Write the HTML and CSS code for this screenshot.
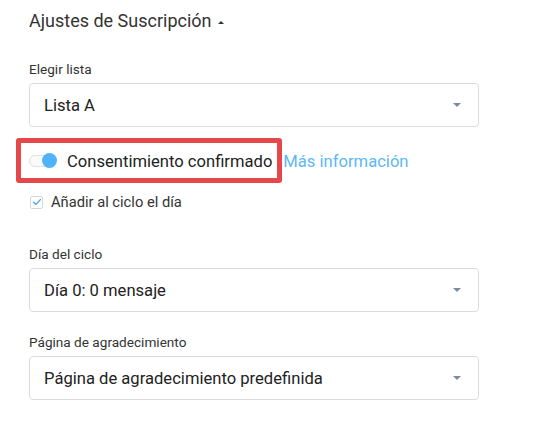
FILE: index.html
```html
<!DOCTYPE html>
<html lang="es">
<head>
<meta charset="utf-8">
<link rel="stylesheet" href="styles.css">
</head>
<body>
<div class="panel">
  <div class="title">Ajustes de Suscripción <span class="caret-up"></span></div>

  <div class="field first">
    <div class="label">Elegir lista</div>
    <div class="select"><span>Lista A</span><span class="caret"></span></div>
  </div>

  <div class="consent">
    <span class="highlight">
      <span class="toggle"><span class="knob"></span></span>
      <span class="consent-text">Consentimiento confirmado</span>
    </span>
    <a class="more">Más información</a>
  </div>

  <div class="check-row">
    <span class="checkbox">
      <svg width="10" height="10" viewBox="0 0 10 10"><path d="M1.6 5.2 L4 7.4 L8.4 2.6" fill="none" stroke="#4aa8f0" stroke-width="1.4" stroke-linecap="round" stroke-linejoin="round"/></svg>
    </span>
    <span class="check-text">Añadir al ciclo el día</span>
  </div>

  <div class="field second">
    <div class="label">Día del ciclo</div>
    <div class="select"><span>Día 0: 0 mensaje</span><span class="caret"></span></div>
  </div>

  <div class="field third">
    <div class="label">Página de agradecimiento</div>
    <div class="select"><span>Página de agradecimiento predefinida</span><span class="caret"></span></div>
  </div>
</div>
</body>
</html>
```

FILE: styles.css
```css
* { box-sizing: border-box; }
html, body { margin: 0; padding: 0; background: #fff; }
body {
  font-family: Roboto, "Liberation Sans", sans-serif;
  color: #222;
  width: 544px;
  height: 426px;
  overflow: hidden;
}
.panel {
  padding: 9px 0 0 29px;
  width: 479px;
}
.title {
  font-size: 18px;
  line-height: 24px;
  height: 24px;
  color: #333;
  display: flex;
  align-items: center;
}
.caret-up {
  display: inline-block;
  width: 0; height: 0;
  margin-left: 6px;
  margin-top: 2px;
  border-left: 3px solid transparent;
  border-right: 3px solid transparent;
  border-bottom: 3px solid #333;
}
.field.first { margin-top: 28px; }
.field.second { margin-top: 36px; }
.field.third { margin-top: 22px; }
.label {
  font-size: 13.6px;
  line-height: 16px;
  height: 16px;
  color: #333;
}
.select {
  margin-top: 6px;
  height: 44px;
  border: 1px solid #dcdcdc;
  border-radius: 4px;
  display: flex;
  align-items: center;
  justify-content: space-between;
  padding: 0 17px 0 14px;
  font-size: 16.6px;
  color: #222;
}
.caret {
  width: 0; height: 0;
  border-left: 4px solid transparent;
  border-right: 4px solid transparent;
  border-top: 4px solid #7d8a9c;
}
.consent {
  margin-top: 23px;
  display: flex;
  align-items: center;
  height: 22px;
  font-size: 16.6px;
}
.highlight {
  position: relative;
  display: flex;
  align-items: center;
  height: 22px;
}
.highlight::after {
  content: "";
  position: absolute;
  left: -13px;
  right: -10px;
  top: -12px;
  bottom: -11px;
  border: 5px solid #e5474b;
  border-radius: 3px;
}
.toggle {
  position: relative;
  width: 27px;
  height: 12px;
  border: 1px solid #e2e2e2;
  border-radius: 6px;
  background: #fafafa;
  margin-right: 11px;
}
.knob {
  position: absolute;
  right: -2px;
  top: -3px;
  width: 15px;
  height: 15px;
  border-radius: 50%;
  background: #4fb3fb;
}
.consent-text { color: #222; }
.more {
  color: #5cb8f6;
  margin-left: 11px;
  cursor: pointer;
}
.check-row {
  margin-top: 22px;
  height: 16px;
  display: flex;
  align-items: center;
  font-size: 14.7px;
  color: #333;
}
.checkbox {
  width: 13px;
  height: 13px;
  border: 1px solid #d8d8d8;
  border-radius: 2px;
  display: flex;
  align-items: center;
  justify-content: center;
  margin-right: 8px;
  margin-left: 1px;
}
.checkbox svg { display: block; }
```
